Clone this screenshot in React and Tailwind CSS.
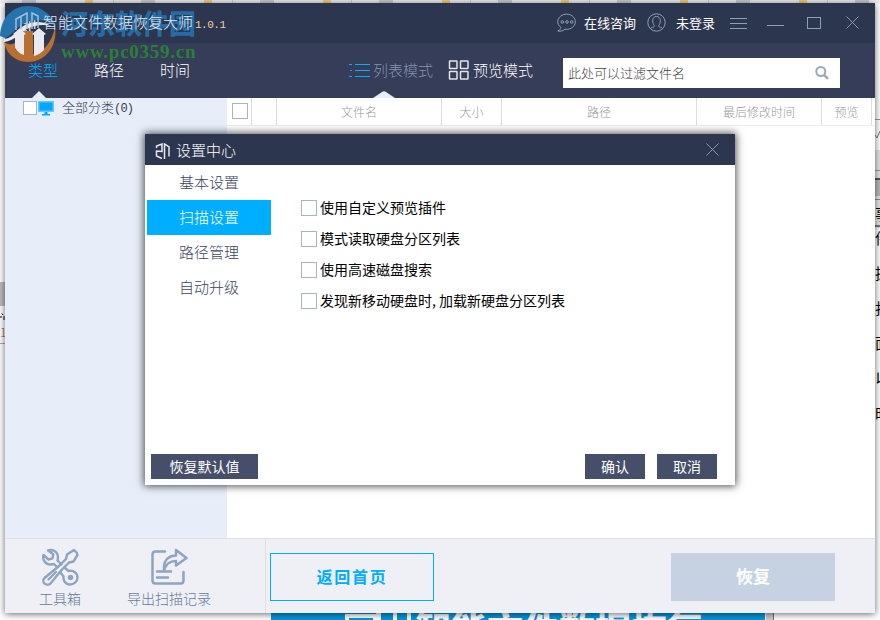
import clsx from "clsx";

const TABS = ["类型", "路径", "时间"];

const COLUMNS = [
    { label: "", width: "w-[25px]" },
    { label: "", width: "w-[25px]" },
    { label: "文件名", width: "w-[165px]" },
    { label: "大小", width: "w-[60px]" },
    { label: "路径", width: "w-[195px]" },
    { label: "最后修改时间", width: "w-[125px]" },
    { label: "预览", width: "w-[50px]" },
];

const SETTINGS = ["基本设置", "扫描设置", "路径管理", "自动升级"];

const OPTIONS = [
    "使用自定义预览插件",
    "模式读取硬盘分区列表",
    "使用高速磁盘搜索",
    "发现新移动硬盘时,加载新硬盘分区列表",
];

const LogoMark = ({ className }) => (
    <svg viewBox="0 0 15 17" className={className} fill="none" stroke="currentColor" strokeWidth="1.5">
        <path d="M1 5V3L6.500 1v7.500L1 8v5l5.500 2.500M9 16V1l4.500 3v9.500" />
    </svg>
);

const CloseIcon = ({ className }) => (
    <svg viewBox="0 0 14 14" className={className} fill="none" stroke="currentColor">
        <path d="M.5.5l13 13M13.5.5l-13 13" />
    </svg>
);

/** Site mark laid over the top left corner of the window. */
const Watermark = () => (
    <div className="pointer-events-none absolute left-0 top-0 z-30">
        <svg width="58" height="64" viewBox="0 0 58 64" className="absolute left-0 top-0">
            <path d="M0 36C1 18 12 6 28 6c14 0 24 9 27 20-9-7-21-8-30-3-9 4-12 12-20 15z" fill="#2573ac" />
            <path d="M55 27c3 18-9 35-27 35C15 62 6 53 4 42c4 3 8 3 11 1v6c3 3 6 4 9 5V31h9v23c11-2 19-12 22-27z" fill="#b96f30" />
            <path d="M4 39c11-1 13-11 23-15 8-3 17-3 24 2-8-2-17-1-24 3-8 4-12 12-23 13z" fill="#e4e8f0" />
            <path d="M13 34l7-6 6 6-2 1v20c-4-1-7-4-9-7V35zM32 34l7-6 7 6-2 1v15c-3 3-6 5-10 6V35z" fill="#e9eaf0" />
            <path d="M16 30V19l11-6v16M21 29V17M32 29V13l6 3v12" stroke="#9fc0dc" strokeWidth="1.5" fill="none" />
        </svg>
        <div className="absolute left-[61px] top-[7px] whitespace-nowrap font-['Noto_Sans_CJK_SC',sans-serif] text-[27px] leading-8 font-black text-[#2575b3]/85">
            河东软件园
        </div>
        <div className="absolute left-[61px] top-[42px] whitespace-nowrap font-['Liberation_Serif',serif] text-[19px] leading-5 font-bold tracking-[0.75px] text-[#2b8038]">
            www.pc0359.cn
        </div>
    </div>
);

/** What shows around the edges of the window. */
const Desktop = () => (
    <div className="absolute inset-0 overflow-hidden bg-white text-black">
        <div className="absolute inset-x-0 top-0 flex h-[3px] bg-[#eeeeef]">
            {[0, 1, 2, 3, 4, 5, 6, 7].map((i) => (
                <div key={i} className="flex h-full w-[119px] shrink-0 items-start">
                    <span className="ml-[22px] h-full w-[14px] bg-[#c9cbd0]" />
                    <span className="ml-[49px] h-full w-2 bg-[#f2cd78]" />
                    <span className="ml-5 h-full w-px bg-[#cfcfcf]" />
                </div>
            ))}
        </div>
        <div className="absolute left-0 top-[282px] h-6 w-[5px] bg-[#bdbdbd]" />
        <svg width="5" height="7" viewBox="0 0 5 7" className="absolute left-0 top-[313px]" stroke="#000" fill="none">
            <path d="M0 4h2M2 .5l1 1.500M4 3v4" />
        </svg>
        <div className="absolute left-0 top-[326px] w-[5px] overflow-hidden text-xs leading-3 text-[#9c5438]">1</div>
        <div className="absolute left-0 top-[343px] h-px w-[5px] bg-[#aaa]" />
        <div className="absolute right-0 top-[119px] h-px w-[5px] bg-[#999]" />
        <svg width="5" height="10" viewBox="0 0 5 10" className="absolute right-0 top-[130px]" stroke="#777" fill="none">
            <path d="M0 5l2 3L5 1" />
        </svg>
        <div className="absolute right-0 top-[150px] flex h-[78px] w-[5px] flex-col bg-[#e5e5e5]">
            <span className="mt-5 h-px bg-[#999]" />
            <span className="mt-[7px] h-0.5 bg-[#555]" />
            <span className="h-4 bg-[#b8b8b8]" />
            <span className="mt-[3px] h-px bg-[#888]" />
            <span className="mt-[25px] h-0.5 bg-[#777]" />
        </div>
        <div className="absolute right-[-10px] top-[196px] flex w-[15px] flex-col text-[15px] leading-[35px] font-normal">
            {["事", "件", "据", "打", "面", "以", "时"].map((c, i) => (
                <span key={c} className={clsx(i === 0 && "-mb-[11px]")}>{c}</span>
            ))}
        </div>
        <div className="absolute left-[271px] top-[610px] h-[10px] w-[494px] overflow-hidden bg-[#0795dd] text-white">
            <span className="absolute left-[74px] top-[4px] h-5 w-8 border-[4px] border-white" />
            <span className="absolute left-[105px] top-0 h-5 w-[5px] bg-white" />
            <span className="absolute left-[122px] top-[-1px] h-5 w-[18px] border-x-[4px] border-white" />
            <span className="absolute left-[144px] top-[-1px] whitespace-nowrap text-[36px] leading-9 font-black">
                智能文件数据恢复
            </span>
        </div>
        <div className="absolute left-[766px] top-[610px] h-[10px] w-2 border-r border-[#777] bg-[#ccc]" />
    </div>
);

const TitleBar = () => (
    <header className="flex h-10 shrink-0 items-center bg-[#2c364e] text-white">
        <LogoMark className="ml-[11px] h-[19px] w-[24px] text-[#b7cce0]" />
        <h1 className="relative z-40 ml-[3px] flex items-baseline text-[15px] leading-5 text-[#e3edf7]">
            智能文件数据恢复大师
            <span className="ml-[2px] font-['Liberation_Mono',monospace] text-[11px] tracking-[-0.5px] text-[#f0cfa6]">1.0.1</span>
        </h1>
        <div className="mb-px ml-auto flex items-center text-[13px] font-normal text-[#8ba0b9]">
            <svg width="20" height="20" viewBox="0 0 20 20" fill="none" stroke="currentColor">
                <path d="M4 14.6A8.8 7.6 0 1 1 8 16.2C6 18 4 18.5.8 18c2-.9 3-2 3.200-3.400z" />
                <circle cx="5.3" cy="9" r="1.3" />
                <circle cx="10" cy="9" r="1.3" />
                <circle cx="14.7" cy="9" r="1.3" />
            </svg>
            <span className="ml-[7px] text-white">在线咨询</span>
            <svg width="19" height="19" viewBox="0 0 19 19" className="ml-[11px]" fill="none" stroke="currentColor">
                <circle cx="9.5" cy="9.5" r="8.7" />
                <path d="M3.5 15.500c.8-1.200 3-1.200 3.700-2 .4-.8-.2-1.400-.7-2.200C5.400 9 4.800 3.500 9.500 3.500s4.100 5.500 3 7.800c-.5.8-1.100 1.400-.7 2.200.7.8 2.900.8 3.700 2" />
            </svg>
            <span className="ml-[10px] text-white">未登录</span>
            <svg width="17" height="11" viewBox="0 0 17 11" className="mt-px ml-[15px]" stroke="currentColor">
                <path d="M0 .5h17M0 5.500h17M0 10.500h17" />
            </svg>
            <span className="mt-[5px] ml-5 h-px w-[17px] bg-current" />
            <span className="mt-px ml-[23px] h-3 w-[14px] border border-current" />
            <CloseIcon className="mr-4 ml-[25px] h-[13px] w-[13px]" />
        </div>
    </header>
);

const NavBar = () => (
    <nav className="flex h-[55px] shrink-0 items-start bg-[#353d58] text-[15px] leading-5 text-white">
        <div className="mt-[17px] ml-[23px] flex w-[320px] gap-9">
            {TABS.map((tab, i) => (
                <div key={tab} className={clsx("relative", i === 0 && "text-[#00aeff]")}>
                    {tab}
                    {i === 0 && (
                        <svg width="14" height="7" className="absolute left-[4px] top-[31px]">
                            <path d="M0 7 7 0l7 7z" fill="#e7eef9" />
                        </svg>
                    )}
                </div>
            ))}
        </div>
        <div className="relative mt-[17px] flex w-[100px] items-center text-[#8393af]">
            <svg width="21" height="15" viewBox="0 0 21 15" className="mr-1 ml-px" stroke="#00aeff">
                <path d="M0 1.500h3M6 1.500h15M1 7.500h2M6 7.500h15M0 13.500h3M6 13.500h15" />
            </svg>
            <span className="-ml-px">列表模式</span>
            <svg width="22" height="7" className="absolute left-[25px] top-[31px]">
                <path d="M0 7 9 1q2-1.500 4 0l9 6z" fill="#e7eef9" />
            </svg>
        </div>
        <div className="mt-[17px] flex items-center">
            <svg width="22" height="20" viewBox="0 0 22 20" className="mr-[3px]" fill="none" stroke="#e4e5e5" strokeWidth="1.500">
                <rect x="1.500" y="1" width="7.500" height="7.500" rx=".5" />
                <rect x="12.500" y="1" width="7.500" height="7.500" rx=".5" />
                <rect x="1.500" y="11.500" width="7.500" height="7.500" rx=".5" />
                <rect x="12.500" y="11.500" width="7.500" height="7.500" rx=".5" />
            </svg>
            预览模式
        </div>
        <div className="mt-[15px] mr-[35px] ml-auto flex h-[30px] w-[277px] items-center justify-between bg-white pr-[7px] pb-px pl-[5px] text-[13px] text-[#444]">
            此处可以过滤文件名
            <svg width="14" height="14" viewBox="0 0 14 14" className="mt-px mr-1" fill="none" stroke="#9aa8b8" strokeWidth="2">
                <circle cx="5.800" cy="5.500" r="4.500" />
                <path d="M9 8.800l4 4" strokeWidth="2.400" />
            </svg>
        </div>
    </nav>
);

const Sidebar = () => (
    <aside className="w-[222px] shrink-0 bg-[#e7eef9]">
        <div className="ml-[18px] flex h-[19px] items-center text-[13px] text-[#333c50]">
            <span className="mt-[1px] h-[14px] w-[14px] border border-[#a3b4cc] bg-white" />
            <svg width="16" height="16" viewBox="0 0 16 16" className="ml-px" fill="#00a8fb">
                <path d="M0 1h16v11H0z" fill="#65c6f6" />
                <path d="M1.500 2.500h13v8h-13zM6.500 12h3v2h2.500v1.500H4V14h2.500z" />
            </svg>
            <span className="ml-[8px]">
                全部分类
                <span className="font-['Liberation_Mono',monospace] text-[12px] tracking-[-.8px]">(0)</span>
            </span>
        </div>
    </aside>
);

const FileTable = () => (
    <main className="min-w-0 flex-1 bg-white">
        <div className="flex h-7 border-b border-[#ededed] text-xs text-[#999]">
            {COLUMNS.map((col, i) => (
                <div key={i} className={clsx("flex items-center justify-center border-r border-[#dcdcdc]", col.width)}>
                    {i === 0 ? <span className="mb-[2px] ml-[2px] h-4 w-4 border border-[#a3b4cc]" /> : col.label}
                </div>
            ))}
        </div>
    </main>
);

const ToolsIcon = () => (
    <svg width="38" height="38" viewBox="0 0 38 38" fill="none" stroke="currentColor" strokeWidth="2.400" strokeLinejoin="round" strokeLinecap="round">
        <path d="M7 2.500c4-1.500 10 .5 10 7l-.5 3 4 4M2.500 7l5 4.500 4-1.200.8-4L7 2.500M2.500 7C1 12 5 17 10 16.500l3-.5 3 3M24 20l3.500 3c5-1 9 2 9 6.500s-4 7-7.500 7-7-3-6.500-8L19 24" />
        <circle cx="29.500" cy="29.500" r="1.600" fill="currentColor" />
        <path d="M35.800 4.800 33 2l-7 4.500-1 4.500-7 7-14.500 12c-2 2-1 4.500 0 5.500s4 2 6 0L21 21.500l7-7 4.500-1 4-6.500zM7.500 31.500l7.500-7.500" />
    </svg>
);

const ExportIcon = () => (
    <svg width="38" height="38" viewBox="0 0 38 38" fill="none" stroke="currentColor" strokeWidth="2.500" strokeLinejoin="round" strokeLinecap="round">
        <path d="M15 3.500H5.500q-3 0-3 3v26q0 3 3 3h25q3 0 3-3V24M7 23.500h14M7 29.500h11" />
        <path d="M14 22.500V19c0-7 5-11.500 12-11.500V2l10.500 8L26 17.500v-4.500c-7 0-10 3-12 9.500z" />
    </svg>
);

const Footer = () => (
    <footer className="flex h-[75px] shrink-0 border-t border-[#dddfe2] bg-[#eff0f6]">
        <div className="w-[261px] shrink-0 border-r border-[#dddfe2] text-sm leading-5 text-[#647b9c]">
            <div className="flex pt-[9px] pl-[30px] [&_svg]:text-[#8fa4bf]">
                <div className="flex w-[50px] flex-col items-center gap-[2px]">
                    <ToolsIcon />
                    工具箱
                </div>
                <div className="ml-[34px] flex w-[100px] flex-col items-center gap-[2px]">
                    <ExportIcon />
                    导出扫描记录
                </div>
            </div>
        </div>
        <button className="mt-[14px] ml-1 h-12 w-[164px] border border-[#00aeff] pb-[3px] text-base font-bold tracking-[1.800px] text-[#00aeff]">
            返回首页
        </button>
        <button className="mt-[14px] mr-10 ml-auto h-12 w-[164px] bg-[#c6d2e1] pb-[3px] text-[17px] font-bold text-white">恢复</button>
    </footer>
);

const SettingsDialog = () => (
    <section className="absolute left-[145px] top-[134px] z-20 flex h-[351px] w-[590px] flex-col bg-white shadow-[0_0_8px_1px_rgba(0,0,0,0.7)]">
        <div className="flex h-[31px] shrink-0 items-center bg-[#2c364e] text-white">
            <LogoMark className="mt-[3px] ml-[10px] h-[17px] w-[16px] text-[#e6e8ed]" />
            <h2 className="mt-[1px] ml-[5px] text-[15px] leading-5">设置中心</h2>
            <CloseIcon className="mr-4 ml-auto h-[13px] w-[13px] text-[#8ba0b9]" />
        </div>
        <div className="flex flex-1">
            <ul className="ml-0.5 w-[124px] text-[15px] text-[#3a4560]">
                {SETTINGS.map((item, i) => (
                    <li key={item} className={clsx("flex h-[35px] items-center pl-8", i === 1 && "bg-[#00aeff] text-white")}>
                        {item}
                    </li>
                ))}
            </ul>
            <div className="mt-[27px] ml-[30px] flex flex-col text-sm font-normal text-black">
                {OPTIONS.map((option) => (
                    <label key={option} className="flex h-[31px] items-center">
                        <span className="mr-[3px] h-4 w-4 border border-[#a3b4cc]" />
                        <span className="mb-[2px]">
                            {option.split(",").map((part, i) => (
                                <span key={part}>
                                    {i > 0 && <span className="inline-block w-[7px]">,</span>}
                                    {part}
                                </span>
                            ))}
                        </span>
                    </label>
                ))}
            </div>
        </div>
        <div className="mb-[6px] flex h-[25px] px-[6px] text-sm leading-[25px] font-normal text-white">
            <button className="w-[107px] bg-[#454f6a]">恢复默认值</button>
            <button className="mr-3 ml-auto w-[60px] bg-[#454f6a]">确认</button>
            <button className="mr-3 w-[60px] bg-[#454f6a]">取消</button>
        </div>
    </section>
);

const App = () => (
    <div className="relative h-[620px] w-[880px] overflow-hidden font-['Noto_Sans_CJK_SC',sans-serif] font-light">
        <Desktop />
        <div className="relative mt-[3px] ml-[5px] flex h-[610px] w-[870px] flex-col shadow-[0_1px_7px_rgba(0,0,0,0.6)]">
            <TitleBar />
            <NavBar />
            <div className="flex min-h-0 flex-1">
                <Sidebar />
                <FileTable />
            </div>
            <Footer />
        </div>
        <SettingsDialog />
        <Watermark />
    </div>
);

export default App;
